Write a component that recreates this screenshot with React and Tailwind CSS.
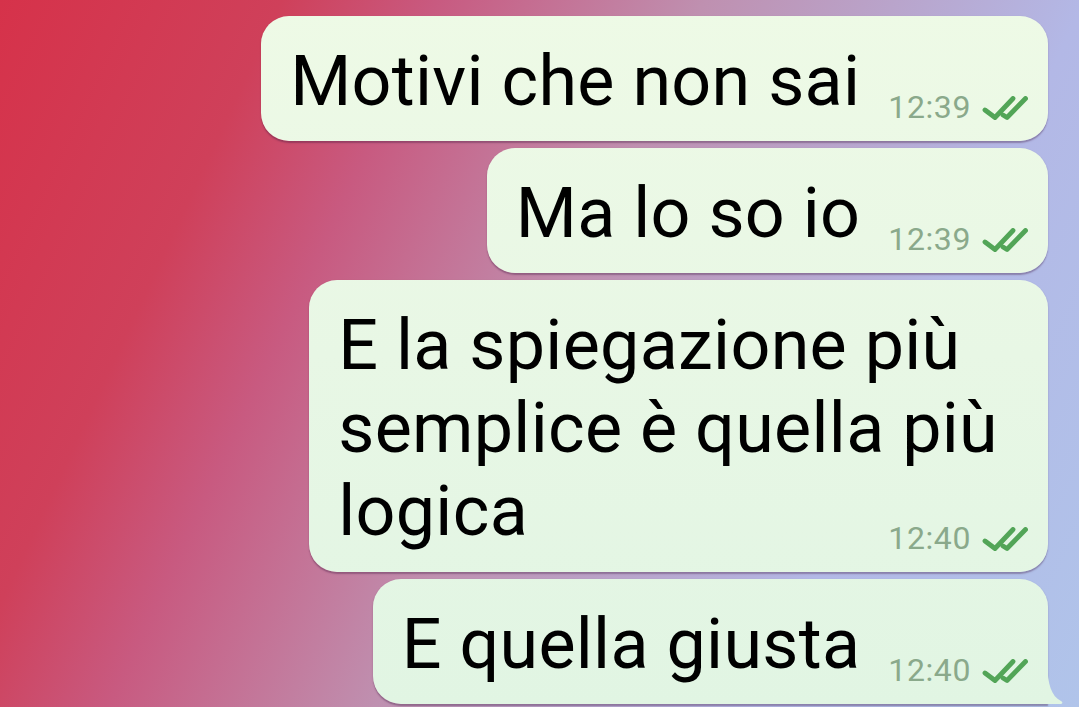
import React from "react";

function Ticks() {
  return (
    <svg width="46" height="24" viewBox="0 0 46 24" className="shrink-0">
      <g fill="none" stroke="#52a557" strokeWidth="4.8" strokeLinecap="round" strokeLinejoin="round">
        <path d="M3 14 L13 21.5 L31 2.5" />
        <path d="M21 19 L25 21.5 L43.5 2.5" />
      </g>
    </svg>
  );
}

function Meta({ time }) {
  return (
    <div className="flex items-end gap-[11px] shrink-0">
      <span className="text-[32px] leading-none text-[#8aa98b] tracking-[0.6px]">{time}</span>
      <div className="mb-[3px]">
        <Ticks />
      </div>
    </div>
  );
}

const bubbleBg =
  "bg-fixed bg-[linear-gradient(180deg,#eefae6_0%,#e8f7e5_50%,#e1f5e3_100%)] shadow-[0_1.5px_1.5px_rgba(60,20,60,0.35)]";

const textCls = "text-[70px] leading-[83px] text-black tracking-[0.3px]";

function Bubble({ text, time, tail }) {
  return (
    <div
      className={`relative flex items-end pl-[29px] pr-[20px] pt-[24px] pb-[18px] rounded-[28px] ${
        tail ? "rounded-br-none" : ""
      } ${bubbleBg}`}
    >
      <span className={`${textCls} whitespace-nowrap`}>{text}</span>
      <div className="ml-[28px]">
        <Meta time={time} />
      </div>
      {tail && (
        <svg
          className="absolute bottom-0 right-[-15px]"
          width="16"
          height="40"
          viewBox="0 0 16 40"
        >
          <path d="M0 0 C1 20 4 32 14 37 C16 38 16 40 13 40 L0 40 Z" fill="#e1f5e3" />
        </svg>
      )}
    </div>
  );
}

function WrapBubble({ lines, time }) {
  return (
    <div className={`flex flex-col pl-[29px] pr-[20px] pt-[24px] pb-[18px] rounded-[28px] ${bubbleBg}`}>
      <div className={`${textCls} pr-[30px]`}>
        {lines.map((l, i) => (
          <div key={i} className="whitespace-nowrap">
            {l}
          </div>
        ))}
      </div>
      <div className="self-end -mt-[31px]">
        <Meta time={time} />
      </div>
    </div>
  );
}

export default function App() {
  return (
    <div
      className="w-[1079px] h-[707px] overflow-hidden bg-[linear-gradient(115deg,#d6324a_0%,#cf405a_20%,#c85a80_31%,#bf90b0_50%,#b3b8e6_77%,#b0c4ea_100%)]"
      style={{ fontFamily: "Roboto, 'Liberation Sans', sans-serif" }}
    >
      <div className="flex flex-col items-end gap-[7px] pt-[16px] pr-[31px]">
        <Bubble text="Motivi che non sai" time="12:39" />
        <Bubble text="Ma lo so io" time="12:39" />
        <WrapBubble
          lines={["E la spiegazione più", "semplice è quella più", "logica"]}
          time="12:40"
        />
        <Bubble text="E quella giusta" time="12:40" tail />
      </div>
    </div>
  );
}
